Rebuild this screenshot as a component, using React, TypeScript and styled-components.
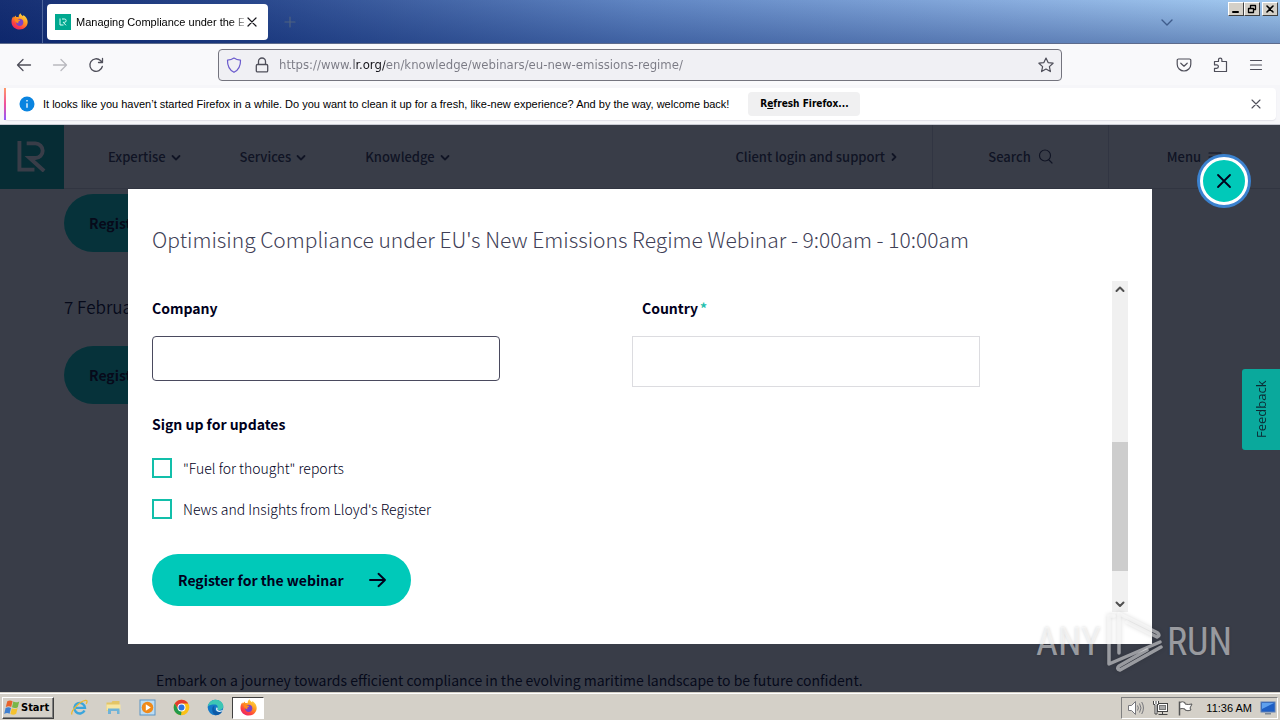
import React from 'react';
import styled, { createGlobalStyle, css } from 'styled-components';

const site = '"Noto Sans CJK SC", "Noto Sans", sans-serif';
const chrome = '"Liberation Sans", Arial, sans-serif';
const chromeWide = '"DejaVu Sans Condensed", "DejaVu Sans", sans-serif';

const Global = createGlobalStyle`
  *, *::before, *::after { box-sizing: border-box; }
  body { margin: 0; font-family: ${chrome}; }
  button, input, select { font: inherit; color: inherit; margin: 0; }
  button { padding: 0; border: 0; background: none; cursor: pointer; }
  svg { display: block; flex: none; }
  a { color: inherit; text-decoration: none; }
`;

const Desktop = styled.div`
  position: relative;
  display: flex;
  flex-direction: column;
  height: 100vh;
  overflow: hidden;
`;

/* ---------- browser chrome ---------- */

const TabStrip = styled.div`
  position: relative;
  flex: none;
  display: flex;
  align-items: center;
  height: 44px;
  border-bottom: 1px solid #5d6b8c;
  background:
    linear-gradient(180deg, rgba(200, 225, 255, 0.06), rgba(18, 45, 112, 0.36)),
    linear-gradient(90deg, #0b246a 0%, #203f86 20%, #5a80bf 50%, #86abdd 80%, #a2caf0 100%);
`;

const PinnedApp = styled.div`
  display: flex;
  align-items: center;
  justify-content: center;
  width: 43px;
  height: 43px;
  padding-right: 3px;
  border-right: 1px solid #4e669c;
`;

const Tab = styled.div`
  display: flex;
  align-items: center;
  gap: 5px;
  width: 221px;
  height: 36px;
  margin-left: 4px;
  padding: 0 8px;
  border-radius: 4px;
  background: #fff;
  font: 11px/16px ${chrome};
`;

const TabTitle = styled.span`
  flex: 1;
  margin-right: -5px;
  overflow: hidden;
  white-space: nowrap;
  color: #000;
  mask-image: linear-gradient(90deg, #000 92%, transparent 104%);
`;

const IconButton = styled.button<{ $size?: number; $color?: string }>`
  display: flex;
  flex: none;
  align-items: center;
  justify-content: center;
  width: ${(p) => p.$size ?? 36}px;
  height: ${(p) => p.$size ?? 36}px;
  color: ${(p) => p.$color ?? '#4f4f5a'};
`;

const StripEnd = styled.div`
  display: flex;
  flex: 1;
  justify-content: flex-end;
  padding-right: 95px;
`;

const WindowControls = styled.div`
  position: absolute;
  top: 2px;
  right: 2px;
  display: flex;
`;

const raised = css`
  border: 1px solid;
  border-color: #fff #404040 #404040 #fff;
  background: #d4d0c8;
`;

const WindowButton = styled.button<{ $apart?: boolean }>`
  ${raised}
  display: flex;
  align-items: center;
  justify-content: center;
  width: 16px;
  height: 14px;
  margin-left: ${(p) => (p.$apart ? 2 : 0)}px;
  color: #000;
`;

const Toolbar = styled.div`
  flex: none;
  display: flex;
  align-items: center;
  height: 41px;
  padding: 0 6px;
  background: #f9f9fb;
`;

const AddressBar = styled.div`
  display: flex;
  flex: 1;
  align-items: center;
  height: 32px;
  margin: 0 104px;
  padding: 0 7px;
  gap: 12px;
  border: 1px solid #74747e;
  border-radius: 4px;
  background: #f0f0f4;
`;

const AddressInput = styled.input`
  flex: 1;
  min-width: 0;
  height: 24px;
  padding: 0;
  margin-left: -3px;
  border: 0;
  outline: 0;
  font: 13px/24px ${chromeWide};
  color: transparent;
  background: linear-gradient(90deg, #7a7a84 75px, #15141a 75px, #15141a 106px, #7a7a84 106px);
  -webkit-background-clip: text;
  background-clip: text;
`;

const NoticeArea = styled.div`
  flex: none;
  padding: 3px 4px 4px;
  border-bottom: 1px solid #c9cbd4;
  background: #f6f6f9;
`;

const Notice = styled.div`
  position: relative;
  display: flex;
  align-items: center;
  height: 32px;
  padding: 0 4px 0 15px;
  border-radius: 4px;
  background: #fff;
  box-shadow: 0 1px 1px #e2e2e8;
  font: 11px/16px ${chrome};
  color: #000;

  &::before {
    content: '';
    position: absolute;
    left: 0;
    top: 0;
    bottom: 0;
    width: 2px;
    background: linear-gradient(180deg, #ff9a68, #f0509a 50%, #9059ff);
  }
`;

const NoticeText = styled.p`
  margin: 0 19px 0 8px;
  white-space: nowrap;
`;

const NoticeAction = styled.button`
  width: 112px;
  height: 24px;
  border-radius: 4px;
  background: #f0f0f1;
  font: bold 10px/16px ${chromeWide};
`;

const NoticeEnd = styled.div`
  display: flex;
  flex: 1;
  justify-content: flex-end;
`;

/* ---------- web page under the dialog ---------- */

const Viewport = styled.main`
  position: relative;
  flex: 1;
  min-height: 0;
  overflow: hidden;
  background: #fff;
  font-family: ${site};
`;

const SiteHeader = styled.header`
  display: flex;
  align-items: center;
  height: 64px;
  border-bottom: 1px solid #d4d4dc;
  font: 500 13px/20px ${site};
  color: #32324a;
`;

const Brand = styled.a`
  display: flex;
  align-items: center;
  justify-content: center;
  width: 64px;
  height: 64px;
  background: #00a99a;
`;

const SiteNav = styled.nav`
  display: flex;
  flex: 1;
  gap: 59px;
  padding-left: 44px;
`;

const NavButton = styled.button`
  display: flex;
  align-items: center;
  gap: 5px;
`;

const LoginLink = styled.a`
  display: flex;
  align-items: center;
  gap: 6px;
  margin-right: 35px;
`;

const HeaderCell = styled.button<{ $width: number }>`
  display: flex;
  align-items: center;
  justify-content: center;
  gap: 7px;
  width: ${(p) => p.$width}px;
  height: 63px;
  border-left: 1px solid #d8d8e0;
`;

const Session = styled.section`
  padding: 5px 64px 0;
`;

const SessionButton = styled.button`
  display: block;
  width: 259px;
  height: 58px;
  padding-left: 25px;
  border-radius: 29px;
  background: #00c9b7;
  font: 700 14px/24px ${site};
  color: #00001c;
  text-align: left;
`;

const SessionDate = styled.h2`
  margin: 41px 0 25px;
  font: 350 17px/28px ${site};
  color: #00001c;
`;

const Lead = styled.p`
  margin: 264px 156px 0;
  font: 400 14px/24px ${site};
  color: #00001c;
`;

/* ---------- dialog ---------- */

const Backdrop = styled.div`
  position: absolute;
  inset: 0;
  background: rgba(8, 12, 26, 0.8);
`;

const Dialog = styled.section`
  position: absolute;
  top: 64px;
  left: 10%;
  right: 10%;
  padding: 35px 24px 32px;
  background: #fff;
  color: #00001c;
`;

const DialogTitle = styled.h1`
  margin: 0 0 27px;
  font: 300 21px/30px ${site};
  color: #404056;
`;

const ScrollArea = styled.div`
  display: flex;
  height: 331px;
`;

const Form = styled.form`
  flex: 1;
  padding-top: 15px;
  font: 300 14px/24px ${site};
`;

const FieldRow = styled.div`
  display: grid;
  grid-template-columns: 1fr 1fr;
  align-items: start;
`;

const Field = styled.div`
  display: grid;
  gap: 16px;
`;

const FieldLabel = styled.label<{ $inset?: boolean }>`
  padding-left: ${(p) => (p.$inset ? 10 : 0)}px;
  font-weight: 700;
`;

const Required = styled.span`
  margin-left: 2px;
  color: #1fbfae;
`;

const TextBox = styled.input`
  width: 100%;
  max-width: 348px;
  height: 45px;
  padding: 0 12px;
  border: 1px solid #4a4a5e;
  border-radius: 4px;
  background: #fff;
`;

const SelectBox = styled.select`
  width: 100%;
  max-width: 348px;
  height: 51px;
  padding: 0 12px;
  appearance: none;
  border: 1px solid #dcdce0;
  border-radius: 0;
  background: #fff;
`;

const Updates = styled.fieldset`
  display: grid;
  gap: 21px;
  margin: 25px 0 35px;
  padding: 0;
  border: 0;
`;

const UpdatesTitle = styled.legend`
  margin-bottom: 22px;
  padding: 0;
  font-weight: 700;
`;

const CheckLabel = styled.label`
  display: flex;
  align-items: center;
  gap: 11px;
  height: 20px;
`;

const CheckBox = styled.input`
  appearance: none;
  width: 20px;
  height: 20px;
  border: 2px solid #12bfaa;
  background: #fff;

  &:checked { background: #12bfaa; }
`;

const Submit = styled.button`
  display: flex;
  align-items: center;
  justify-content: space-between;
  width: 259px;
  height: 52px;
  padding: 0 25px 0 26px;
  border-radius: 26px;
  background: #00c9b9;
  font-weight: 700;
`;

const Scrollbar = styled.div`
  display: flex;
  flex-direction: column;
  width: 16px;
  background: #f0f0f0;
`;

const ScrollTrack = styled.div`
  display: flex;
  flex: 1;
  flex-direction: column;
  justify-content: flex-end;
  padding-bottom: 25px;
`;

const ScrollThumb = styled.div`
  height: 129px;
  background: #cdcdcd;
`;

const CloseDialog = styled.button`
  position: absolute;
  top: 32px;
  right: 32px;
  display: flex;
  align-items: center;
  justify-content: center;
  width: 48px;
  height: 48px;
  border: 3px solid #fff;
  border-radius: 50%;
  background: #00c9b9;
  box-shadow: 0 0 0 3px #3b82cf;
  color: #00001c;
`;

const Feedback = styled.button`
  position: absolute;
  top: 244px;
  right: 0;
  width: 38px;
  height: 81px;
  border-radius: 0 3px 3px 0;
  background: #0aa99c;
  font: 13px/38px "Open Sans", sans-serif;
  color: #0c2a33;
  writing-mode: vertical-rl;
  transform: rotate(180deg);
`;

const Watermark = styled.div`
  position: absolute;
  right: 48px;
  bottom: 46px;
  display: flex;
  align-items: center;
  gap: 4px;
  font: 400 38px/64px "Roboto Condensed", Roboto, sans-serif;
  color: rgba(255, 255, 255, 0.5);
  text-shadow: 0 0 3px rgba(0, 0, 0, 0.16);
  pointer-events: none;

  svg { filter: drop-shadow(0 0 2px rgba(0, 0, 0, 0.3)); }
`;

/* ---------- taskbar ---------- */

const Taskbar = styled.footer`
  flex: none;
  display: flex;
  align-items: center;
  height: 28px;
  padding: 2px 2px 0;
  border-top: 1px solid #d4d0c8;
  box-shadow: inset 0 1px #fff;
  background: #d4d0c8;
  font: 11px/16px ${chrome};
  color: #000;
`;

const StartButton = styled.button`
  ${raised}
  display: flex;
  align-items: center;
  width: 52px;
  height: 22px;
  padding-left: 1px;
  font: bold 11px/16px ${chromeWide};
  box-shadow: inset -1px -1px #808080;
`;

const QuickLaunch = styled.div`
  display: flex;
  flex: 1;
  align-items: center;
  padding-left: 8px;
`;

const TaskButton = styled.button<{ $active?: boolean }>`
  display: flex;
  align-items: center;
  justify-content: center;
  width: 34px;
  height: 22px;
  ${(p) =>
    p.$active &&
    css`
      width: 32px;
      background: #fff;
      border: 1px solid;
      border-color: #404040 #fff #fff #404040;
    `}
`;

const Tray = styled.div`
  display: flex;
  align-items: center;
  gap: 8px;
  height: 22px;
  padding: 0 1px 0 5px;
  border: 1px solid;
  border-color: #808080 #fff #fff #808080;
`;

const Clock = styled.time`
  margin-left: 4px;
  font: 11px/16px ${chrome};
`;

/* ---------- icons ---------- */

const Line = ({ d, w = 16, h = w, sw = 1.2, color = 'currentColor' }: { d: string; w?: number; h?: number; sw?: number; color?: string }) => (
  <svg width={w} height={h} viewBox={`0 0 ${w} ${h}`} fill="none" stroke={color} strokeWidth={sw} strokeLinecap="round" strokeLinejoin="round" aria-hidden="true">
    <path d={d} />
  </svg>
);

const FirefoxIcon = ({ id }: { id: string }) => (
  <svg width="17" height="17" viewBox="0 0 17 17" aria-hidden="true">
    <defs>
      <linearGradient id={id} x1="0.85" y1="0.05" x2="0.25" y2="1">
        <stop offset="0" stopColor="#ffe14a" />
        <stop offset="0.4" stopColor="#ff9a1f" />
        <stop offset="0.75" stopColor="#ff4040" />
        <stop offset="1" stopColor="#e5226f" />
      </linearGradient>
    </defs>
    <path fill={`url(#${id})`} d="M9.6.3c.2 1.3 1.1 2 2.4 3 .3-.4.3-.9.2-1.3 2.6 1.500 4.500 4.100 4.500 7.100 0 4.200-3.500 7.500-8 7.500S.5 13.300.5 9c0-2.200.6-4.200 1.900-5.700 0 .6.1 1 .3 1.300C3.300 3.700 4.200 3 5 2.500c-.1.700 0 1.200.3 1.600.8-.2 1.700-.1 2.400.2C7.500 2.700 8.200 1.200 9.600.3z" />
    <circle cx="8.700" cy="9.300" r="3.600" fill="#7a43c8" />
    <path fill="#ff8a1c" d="M3.300 6.300c1.600-1 3-.6 3.900.3 1 0 1.700.2 1.900.7-.2.900-1.600.8-1.900 1.600-.1.600.3 1 .9 1.200-1.800.6-3.600-.9-4.800-3.800z" />
  </svg>
);

const SiteMark = ({ size, stroke, sw }: { size: number; stroke: string; sw: number }) => (
  <svg width={size} height={size} viewBox="0 0 32 32" fill="none" stroke={stroke} strokeWidth={sw} aria-hidden="true">
    <path d="M2.500 0V29.500H18" />
    <path d="M10 2.500H19a7.500 7.500 0 0 1 0 15H13L28 31" />
  </svg>
);

const Favicon = () => (
  <svg width="16" height="16" viewBox="0 0 16 16" aria-hidden="true">
    <rect width="16" height="16" fill="#00a88f" />
    <path d="M5 4.500v6.500h3.500M7 5h2.500a1.500 1.500 0 0 1 0 3.300H8.200L11 11.300" fill="none" stroke="#d8fff6" strokeWidth="1" />
  </svg>
);

const InfoIcon = () => (
  <svg width="16" height="16" viewBox="0 0 16 16" aria-hidden="true">
    <circle cx="8" cy="8" r="7.500" fill="#0a84e0" />
    <path d="M8 7.200v4.600M8 4v1.500" stroke="#fff" strokeWidth="1.300" />
  </svg>
);

const WindowsFlag = () => (
  <svg width="17" height="16" viewBox="0 0 17 16" aria-hidden="true">
    <path fill="#e8622a" d="M3.300 1.300C5 .1 7 .1 8.600 1.200L7.200 7C5.500 6 3.600 6.100 1.800 7.100z" />
    <path fill="#7ab648" d="M9.300 1.600c1.900 1 3.900.9 5.900-.2L13.800 7.200c-1.900 1.100-3.900 1.100-5.800.1z" />
    <path fill="#3f7fd0" d="M1.600 8c1.800-1.100 3.700-1.100 5.400-.1L5.600 13.700C3.900 12.700 2 12.800.2 13.900z" />
    <path fill="#f5c22e" d="M7.800 8.200c1.900 1 3.800 1 5.800-.1l-1.400 5.700c-1.900 1.100-3.900 1.100-5.800.1z" />
  </svg>
);

const IeIcon = () => (
  <svg width="17" height="17" viewBox="0 0 17 17" fill="none" aria-hidden="true">
    <path d="M13.500 11.500A5.300 5.300 0 1 1 14 8.900H5" stroke="#3aa5dc" strokeWidth="2.400" />
    <path d="M1 15.500C-.8 12.500 8.500 2.200 14.500 1.300c2-.2 1.800 1.700.7 3.500" stroke="#edb92e" strokeWidth="1.300" />
  </svg>
);

const FolderIcon = () => (
  <svg width="17" height="17" viewBox="0 0 17 17" aria-hidden="true">
    <path fill="#e3c566" d="M1.500 3.500h5l1-1.500h7v10h-13z" />
    <path fill="#f7e6a2" d="M1.500 5.500h14v6h-14z" />
    <path fill="#6fb3d8" d="M3 9.500h11.500V15H12v-3H6v3H3z" />
  </svg>
);

const MediaIcon = () => (
  <svg width="17" height="17" viewBox="0 0 17 17" aria-hidden="true">
    <rect x="1" y="1" width="15" height="15" fill="#bcdcf3" stroke="#5b94c4" />
    <circle cx="8.500" cy="8.500" r="5.800" fill="#f08a1a" />
    <path fill="#fff" d="M6.800 5.300l5 3.200-5 3.200z" />
  </svg>
);

const ChromeIcon = () => (
  <svg width="17" height="17" viewBox="0 0 17 17" aria-hidden="true">
    <circle cx="8.500" cy="8.500" r="7.800" fill="#fbc116" />
    <path fill="#e33b2e" d="M1.750 4.600A7.800 7.800 0 0 1 15.250 4.600H8.500v3.900L5.100 10.450z" />
    <path fill="#229a4b" d="M1.750 4.600l3.350 5.850L8.500 12.400 8 16.300A7.800 7.800 0 0 1 1.750 4.600z" />
    <circle cx="8.500" cy="8.500" r="4" fill="#fff" />
    <circle cx="8.500" cy="8.500" r="3" fill="#2c74e0" />
  </svg>
);

const EdgeIcon = () => (
  <svg width="17" height="17" viewBox="0 0 17 17" aria-hidden="true">
    <circle cx="8.500" cy="8.500" r="7.800" fill="#1479c8" />
    <path fill="#3cc6b4" d="M.9 7.200C1.700 3.300 4.900.7 8.700.7c4.400 0 7.600 3 7.600 6.500 0 2.300-1.800 3.700-4 3.700-1.700 0-2.300-.7-1.800-1.500.9-1.600-.4-3.800-3-3.800-2.900 0-5.300.6-6.600 1.600z" />
    <path fill="#e8f4f8" d="M9.800 8.200c.9.500.9 1.200.6 1.900-.3.800.5 1.600 2.300 1.600 1.300 0 2.300-.4 3-1 0 1-.4 1.700-1.100 2.300-3.200.7-6-.9-5.600-3.200z" />
    <path fill="#0d5aa7" d="M5.200 10.500c0-2 1-3.200 2.300-3.700-1.300 3 .8 6.300 4.700 6.300 1.200 0 2.200-.3 3-.8-1.300 2.400-3.700 4-6.700 4-2-.6-3.300-3.300-3.300-5.800z" />
  </svg>
);

const SoundIcon = () => (
  <svg width="17" height="16" viewBox="0 0 17 16" fill="none" stroke="#77777c" aria-hidden="true">
    <path fill="#fff" d="M1.500 5.500h3l4-4v13l-4-4h-3z" />
    <path d="M10.500 5.500q1.800 2.500 0 5M12.500 3.500q3 4.500 0 9M14.700 2q3.500 6 0 12" />
  </svg>
);

const NetworkIcon = () => (
  <svg width="17" height="16" viewBox="0 0 17 16" stroke="#444" aria-hidden="true">
    <rect x="5.500" y="3.500" width="10" height="8" fill="#fff" />
    <rect x="7.500" y="5.500" width="6" height="4" fill="#a8a8a8" stroke="#777" />
    <path d="M6.500 14.500h9M10.500 12v2" />
    <path fill="#fff" d="M1.500 1v3.500h1.500V14h2V4.500h1.500V1M4 1v3" />
  </svg>
);

const FlagIcon = () => (
  <svg width="17" height="16" viewBox="0 0 17 16" stroke="#555" aria-hidden="true">
    <path fill="#fff" d="M2.500 2.500q3-1.500 5.500 0v1.500q3 1 7 0l-2 4 1 2q-3 1.500-6 0V9q-3-1-5.500 0z" />
    <path d="M2.500 1.500v14" strokeWidth="1.500" />
  </svg>
);

const ScreenIcon = () => (
  <svg width="16" height="14" viewBox="0 0 16 14" aria-hidden="true">
    <rect x="1" y="1" width="14" height="10" fill="#1f5fc4" stroke="#5d7fb4" />
    <path fill="#5fa0ee" d="M2 2h12L2 8z" />
    <path fill="#7d8894" d="M5 12h6v1.500H5z" />
  </svg>
);

const PlayMark = () => (
  <svg width="58" height="64" viewBox="0 0 58 64" fill="none" stroke="rgba(255,255,255,.5)" strokeWidth="3.500" strokeLinecap="round" strokeLinejoin="round" aria-hidden="true">
    <path d="M14 43V3.500L52 22.500q4 3 0 4.500L22 12" />
    <path d="M9 6H4V54L55 32" />
    <path d="M56 37L15 60q-4-1-1-4L42 40" />
  </svg>
);

const navItems = ['Expertise', 'Services', 'Knowledge'];
const updates = ['"Fuel for thought" reports', "News and Insights from Lloyd's Register"];

export default function App() {
  return (
    <Desktop>
      <Global />
      <TabStrip>
        <PinnedApp><FirefoxIcon id="fox-tab" /></PinnedApp>
        <Tab>
          <Favicon />
          <TabTitle>Managing Compliance under the EU</TabTitle>
          <IconButton $size={16} $color="#15141a" aria-label="Close tab"><Line d="M4 4l8 8M12 4l-8 8" /></IconButton>
        </Tab>
        <IconButton $size={44} $color="#4f6280" aria-label="New tab"><Line d="M8 3v10M3 8h10" /></IconButton>
        <StripEnd>
          <IconButton $color="#3f5c8c" aria-label="List all tabs"><Line d="M3 6l5 5 5-5" sw={1.4} /></IconButton>
        </StripEnd>
        <WindowControls>
          <WindowButton aria-label="Minimize"><Line w={10} d="M2 8h5" sw={2} /></WindowButton>
          <WindowButton aria-label="Restore"><Line w={10} d="M3.500 3.500v-2h5v4h-2M1.500 4.500h5v4h-5z" sw={1.3} /></WindowButton>
          <WindowButton $apart aria-label="Close"><Line w={10} d="M2 2l6 6M8 2l-6 6" sw={1.6} /></WindowButton>
        </WindowControls>
      </TabStrip>

      <Toolbar>
        <IconButton aria-label="Back"><Line d="M14.500 8H1.500M7 2.500L1.500 8 7 13.500" sw={1.3} /></IconButton>
        <IconButton $color="#b9b9bf" aria-label="Forward"><Line d="M1.500 8h13M9 2.500L14.500 8 9 13.500" sw={1.3} /></IconButton>
        <IconButton aria-label="Reload"><Line d="M14.300 9.500A6.300 6.300 0 1 1 12.500 3.500L14.500 5.500M14.500 1.500v4h-4" sw={1.3} /></IconButton>
        <AddressBar>
          <Line d="M8 1C6.300 2.200 4 3 1.500 3.200 1.300 9.500 3.500 13 8 15.300 12.500 13 14.700 9.500 14.500 3.200 12 3 9.700 2.200 8 1z" color="#6a5acd" sw={1.2} />
          <Line d="M3.500 7.500h9a1.200 1.200 0 0 1 1.200 1.200v5a1.200 1.200 0 0 1-1.200 1.200h-9a1.200 1.200 0 0 1-1.200-1.200v-5a1.200 1.200 0 0 1 1.200-1.200zM4.500 7.500V4.500a3.500 3.500 0 0 1 7 0v3" color="#4f4f5a" sw={1.3} />
          <AddressInput aria-label="Address" defaultValue="https://www.lr.org/en/knowledge/webinars/eu-new-emissions-regime/" />
          <Line d="M8 1l2.100 4.600 5 .6-3.700 3.400 1 5L8 12.100l-4.400 2.500 1-5L.9 6.200l5-.6z" color="#4f4f5a" sw={1.2} />
        </AddressBar>
        <IconButton aria-label="Save to Pocket"><Line d="M2.500 2h11a1.300 1.300 0 0 1 1.300 1.300v3.900a6.800 6.800 0 0 1-13.600 0V3.300A1.300 1.300 0 0 1 2.500 2zM4.800 6.200L8 9.200l3.200-3" /></IconButton>
        <IconButton aria-label="Extensions"><Line d="M2.500 4.500h4V2.800a1.700 1.700 0 0 1 3.400 0v1.700h4.600v10h-12v-3.200h2.200a1.700 1.700 0 0 0 0-3.400H2.500z" /></IconButton>
        <IconButton aria-label="Menu"><Line d="M2.500 3.500h11M2.500 8h11M2.500 12.500h11" /></IconButton>
      </Toolbar>

      <NoticeArea>
        <Notice>
          <InfoIcon />
          <NoticeText>It looks like you haven’t started Firefox in a while. Do you want to clean it up for a fresh, like-new experience? And by the way, welcome back!</NoticeText>
          <NoticeAction>R<u>e</u>fresh Firefox...</NoticeAction>
          <NoticeEnd>
            <IconButton $size={32} aria-label="Dismiss"><Line d="M4 4l8 8M12 4l-8 8" sw={1.1} /></IconButton>
          </NoticeEnd>
        </Notice>
      </NoticeArea>

      <Viewport>
        <SiteHeader>
          <Brand href="#home" aria-label="Home"><SiteMark size={31} stroke="#fff" sw={4} /></Brand>
          <SiteNav>
            {navItems.map((item) => (
              <NavButton key={item}>{item}<Line w={10} d="M1.500 4L5 7.500 8.500 4" sw={1.8} /></NavButton>
            ))}
          </SiteNav>
          <LoginLink href="#login">Client login and support<Line w={6} h={10} d="M1.500 2l3 3-3 3" sw={1.8} /></LoginLink>
          <HeaderCell $width={176}>Search<Line w={15} d="M12.500 6.500a5.500 5.500 0 1 1-11 0 5.500 5.500 0 0 1 11 0zM11 11l3 3" /></HeaderCell>
          <HeaderCell $width={172}>Menu<Line w={14} d="M1 3h12M1 7h12M1 11h12" /></HeaderCell>
        </SiteHeader>
        <Session>
          <SessionButton>Register for the webinar</SessionButton>
          <SessionDate>7 February 2024</SessionDate>
          <SessionButton>Register for the webinar</SessionButton>
        </Session>
        <Lead>Embark on a journey towards efficient compliance in the evolving maritime landscape to be future confident.</Lead>

        <Backdrop />
        <Dialog role="dialog" aria-labelledby="dialog-title">
          <DialogTitle id="dialog-title">Optimising Compliance under EU's New Emissions Regime Webinar - 9:00am - 10:00am</DialogTitle>
          <ScrollArea>
            <Form>
              <FieldRow>
                <Field>
                  <FieldLabel htmlFor="company">Company</FieldLabel>
                  <TextBox id="company" type="text" />
                </Field>
                <Field>
                  <FieldLabel htmlFor="country" $inset>Country<Required>*</Required></FieldLabel>
                  <SelectBox id="country" required><option value="" /></SelectBox>
                </Field>
              </FieldRow>
              <Updates>
                <UpdatesTitle>Sign up for updates</UpdatesTitle>
                {updates.map((text) => (
                  <CheckLabel key={text}><CheckBox type="checkbox" />{text}</CheckLabel>
                ))}
              </Updates>
              <Submit type="button">Register for the webinar<Line w={17} h={16} d="M1 8h15M9.500 1.800L16 8l-6.500 6.200" sw={1.9} /></Submit>
            </Form>
            <Scrollbar>
              <Line d="M4.500 10L8 6.500 11.500 10" color="#505050" sw={2} />
              <ScrollTrack><ScrollThumb /></ScrollTrack>
              <Line d="M4.500 6.500L8 10l3.500-3.500" color="#505050" sw={2} />
            </Scrollbar>
          </ScrollArea>
        </Dialog>
        <CloseDialog aria-label="Close dialog"><Line d="M2 2l12 12M14 2L2 14" sw={1.8} /></CloseDialog>
        <Feedback>Feedback</Feedback>
      </Viewport>

      <Taskbar>
        <StartButton><WindowsFlag />Start</StartButton>
        <QuickLaunch>
          <TaskButton aria-label="Internet Explorer"><IeIcon /></TaskButton>
          <TaskButton aria-label="File Explorer"><FolderIcon /></TaskButton>
          <TaskButton aria-label="Media Player"><MediaIcon /></TaskButton>
          <TaskButton aria-label="Chrome"><ChromeIcon /></TaskButton>
          <TaskButton aria-label="Edge"><EdgeIcon /></TaskButton>
          <TaskButton $active aria-label="Firefox"><FirefoxIcon id="fox-task" /></TaskButton>
        </QuickLaunch>
        <Tray>
          <SoundIcon />
          <NetworkIcon />
          <FlagIcon />
          <Clock>11:36 AM</Clock>
          <ScreenIcon />
        </Tray>
      </Taskbar>

      <Watermark><span>ANY</span><PlayMark /><span>RUN</span></Watermark>
    </Desktop>
  );
}
